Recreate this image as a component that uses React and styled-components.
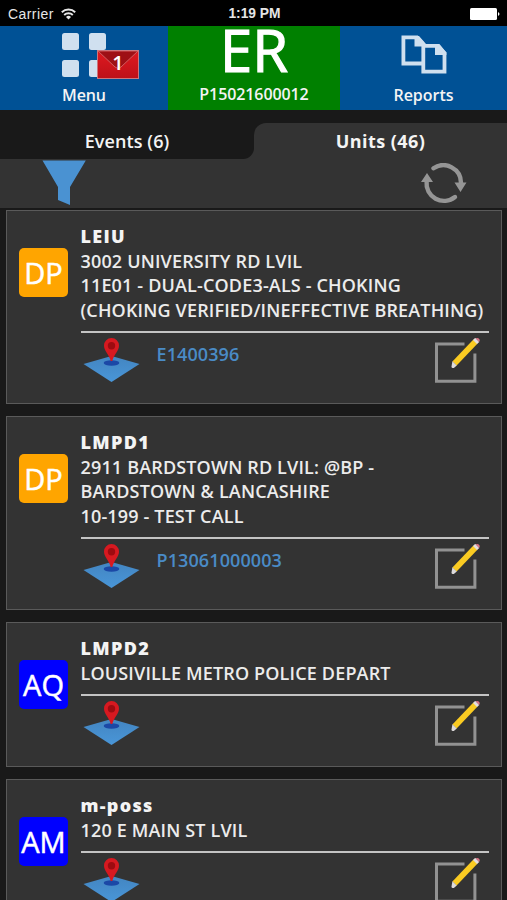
import React from "react";
import styled, { createGlobalStyle } from "styled-components";

const Global = createGlobalStyle`
  * { box-sizing: border-box; }
  html, body { margin: 0; background: #191919; }
  body { font-family: "Open Sans", "Noto Sans", sans-serif; color: #f4f4f4; }
  svg { display: block; flex: none; }
`;

const Screen = styled.div`
  width: 507px;
  height: 900px;
  overflow: hidden;
  background: #191919;
`;

const StatusBar = styled.div`
  display: grid;
  grid-template-columns: 1fr auto 1fr;
  align-items: center;
  height: 26px;
  padding: 2px 6px 0 8px;
  background: #000;
  color: #e6e6e6;
  font: 14px/20px "Liberation Sans", Arial, sans-serif;
`;

const Carrier = styled.div`
  display: flex;
  align-items: center;
  gap: 7px;
  letter-spacing: 0.42px;
`;

const Clock = styled.div`
  font-weight: 700;
  font-size: 13.8px;
  line-height: 16px;
`;

const Battery = styled.div`
  display: flex;
  justify-content: flex-end;
`;

const Header = styled.div`
  display: grid;
  grid-template-columns: 168px 172px 167px;
  height: 84px;
`;

const HeaderButton = styled.div`
  display: flex;
  flex-direction: column;
  align-items: center;
  height: 84px;
  padding-top: ${(p) => p.$top}px;
  background: ${(p) => (p.$active ? "#008000" : "#005195")};
`;

const HeaderLabel = styled.div`
  margin-top: ${(p) => p.$gap || 0}px;
  font-size: 16px;
  line-height: 22px;
  font-weight: 600;
  letter-spacing: ${(p) => p.$spacing || 0}px;
`;

const StatusCode = styled.div`
  font-size: 58px;
  line-height: 48px;
  height: 48px;
  margin-bottom: 9px;
  -webkit-text-stroke: 1.2px #fff;
  color: #fff;
`;

const MenuArt = styled.div`
  position: relative;
`;

const MailBadge = styled.div`
  position: absolute;
  left: 35px;
  top: 17px;
  width: 42px;
  height: 29px;
  svg { position: absolute; inset: 0; }
  span {
    position: absolute;
    inset: 0;
    text-align: center;
    font-size: 20px;
    line-height: 26px;
    font-weight: 600;
    color: #fff;
  }
`;

const Tabs = styled.div`
  display: grid;
  grid-template-columns: 254px 253px;
  height: 49px;
`;

const TabSlot = styled.div`
  padding-top: ${(p) => (p.$active ? 13 : 0)}px;
  background: ${(p) => (p.$active ? "#191919" : "#333")};
`;

const Tab = styled.div`
  height: 100%;
  padding-top: ${(p) => (p.$active ? 6 : 19)}px;
  border-radius: ${(p) => (p.$active ? "12px 0 0 0" : "0 0 11px 0")};
  background: ${(p) => (p.$active ? "#333" : "#191919")};
  text-align: center;
  font-size: 18px;
  line-height: 25px;
  font-weight: ${(p) => (p.$active ? 700 : 600)};
  letter-spacing: ${(p) => (p.$active ? 0.45 : 0.1)}px;
`;

const Toolbar = styled.div`
  display: flex;
  justify-content: space-between;
  align-items: flex-start;
  height: 49px;
  padding: 1px 40px 0 42px;
  background: #333;
  svg + svg { margin-top: 3px; }
`;

const List = styled.div`
  display: flex;
  flex-direction: column;
  gap: 12.5px;
  padding: 2px 5px 0 6px;
`;

const Card = styled.div`
  display: grid;
  grid-template-columns: 49px 408.5px;
  column-gap: 12.5px;
  flex: none;
  height: ${(p) => p.$height}px;
  padding: 13px 12px 0;
  border: 1px solid #5a5a5a;
  background: #333;
`;

const Avatar = styled.div`
  width: 49px;
  height: 49px;
  margin-top: 24px;
  border-radius: 5px;
  background: ${(p) => p.$color};
  color: #fff;
  text-align: center;
  white-space: nowrap;
  font-size: 29px;
  line-height: 49px;
  -webkit-text-stroke: 0.5px #fff;
`;

const Body = styled.div`
  min-width: 0;
  font-size: 18px;
  line-height: 24.5px;
  font-weight: 600;
  white-space: nowrap;
`;

const UnitName = styled.div`
  font-weight: 800;
  letter-spacing: 1.3px;
`;

const Line = styled.div`
  color: #ececec;
  letter-spacing: 0.16px;
`;

const Actions = styled.div`
  display: flex;
  align-items: flex-start;
  margin-top: 9px;
  padding: 5px 8px 0 2px;
  border-top: 2px solid #c4c4c4;
`;

const EventLink = styled.div`
  flex: 1;
  margin: 4px 0 0 16px;
  color: #4a8bc6;
  letter-spacing: 0.1px;
`;

function WifiIcon() {
  return (
    <svg width="15" height="12" viewBox="0 0 15 12" fill="none" stroke="#e6e6e6" strokeWidth="1.9">
      <path d="M.8 4.2a9.6 9.6 0 0 1 13.4 0M3.2 7a6.2 6.2 0 0 1 8.6 0" />
      <path d="M7.5 11.5 5 9a3.6 3.6 0 0 1 5 0Z" fill="#e6e6e6" stroke="none" />
    </svg>
  );
}

function BatteryIcon() {
  return (
    <svg width="31" height="12" viewBox="0 0 31 12" fill="#fff">
      <rect x="0" width="27" height="12" rx="1.5" />
      <path d="M28 4q3 2 0 4Z" />
    </svg>
  );
}

function GridIcon() {
  return (
    <svg width="44" height="44" viewBox="0 0 44 44" fill="#d0e0ef">
      <rect width="17" height="17" rx="2.5" />
      <rect x="27" width="17" height="17" rx="2.5" />
      <rect y="27" width="17" height="17" rx="2.5" />
      <rect x="27" y="27" width="17" height="17" rx="2.5" />
    </svg>
  );
}

function Envelope() {
  return (
    <svg width="42" height="29" viewBox="0 0 42 29">
      <defs>
        <linearGradient id="mail" x2="0" y2="1">
          <stop offset="0" stopColor="#e01920" />
          <stop offset="1" stopColor="#bd1119" />
        </linearGradient>
      </defs>
      <rect x=".5" y=".5" width="41" height="28" fill="url(#mail)" />
      <path d="M1 1h40L24 17q-3 3-6 0Z" fill="#9e1015" stroke="#d25c60" strokeWidth="1" />
      <rect x=".5" y=".5" width="41" height="28" fill="none" stroke="#ca777e" />
    </svg>
  );
}

function ReportsIcon() {
  return (
    <svg width="46" height="40" viewBox="0 0 46 40" fill="none" stroke="#d0e0ef" strokeWidth="3.8">
      <path d="M21 28.5H2.4V2.4H16l6 6.5" />
      <path d="M13.5 1H18l7 8v2.5H13.5Z" fill="#d0e0ef" stroke="none" />
      <path d="M22.3 10.8h14.5l6.7 7.5v18.3H22.3Z" />
      <path d="M34 9h4.4l7 8.5V20H34Z" fill="#d0e0ef" stroke="none" />
    </svg>
  );
}

function FilterIcon() {
  return (
    <svg width="45" height="46" viewBox="0 0 45 46">
      <path d="M.5.5h43.3L28 27v18l-12-5V27Z" fill="#4a92d2" />
    </svg>
  );
}

function RefreshIcon() {
  return (
    <svg width="46" height="42" viewBox="0 0 46 42" fill="none" stroke="#959595" strokeWidth="4.4" strokeLinecap="round">
      <path d="M12.5 5.3A17.6 17.6 0 0 1 40 20" />
      <path d="M5.6 18.5A17.5 17.5 0 0 0 34 34" />
      <path d="M33.5 19.5h12L39.5 29ZM0 19h12L6 10Z" fill="#959595" stroke="none" />
    </svg>
  );
}

function MapPin() {
  return (
    <svg width="58" height="46" viewBox="0 0 58 46">
      <defs>
        <linearGradient id="plane" x2="0" y2="1">
          <stop offset="0" stopColor="#4385c1" />
          <stop offset="1" stopColor="#4996d8" />
        </linearGradient>
      </defs>
      <path d="M.5 26 28.5 18 56.5 26 28.5 44Z" fill="url(#plane)" />
      <ellipse cx="28.5" cy="25" rx="7.8" ry="2.7" fill="#1b48a6" />
      <path d="M21 7.5a7.5 7.5 0 0 1 15 0C36 13 31 16 29.3 23h-1.6C26 16 21 13 21 7.5Z" fill="#d71920" />
      <circle cx="28.5" cy="7.7" r="3.7" fill="#9d0b10" />
    </svg>
  );
}

function EditIcon() {
  return (
    <svg width="47" height="46" viewBox="0 0 47 46">
      <path d="M30.5 5.9H2.5v37.4h38.4V15.5" fill="none" stroke="#929292" strokeWidth="3" />
      <path d="m20.5 25.5 21-22" stroke="#facb22" strokeWidth="5.8" />
      <path d="m17.5 28.8.9-5.5 4.4 4.2-3 2.4q-2.2.6-2.3-1.1Z" fill="#dedbdc" />
      <path d="m39 2 2.2-2.2 4.1 4.1L43 6.1Z" fill="#e4dddf" />
      <path d="m41.7.1 1.3-.1q3 .5 2.7 2.7l-.7 1.3Z" fill="#dd7587" />
    </svg>
  );
}

const units = [
  {
    code: "DP", color: "#ffa500", name: "LEIU", event: "E1400396", height: 193.5,
    lines: ["3002 UNIVERSITY RD LVIL", "11E01 - DUAL-CODE3-ALS - CHOKING", "(CHOKING VERIFIED/INEFFECTIVE BREATHING)"],
  },
  {
    code: "DP", color: "#ffa500", name: "LMPD1", event: "P13061000003", height: 193.5,
    lines: ["2911 BARDSTOWN RD LVIL: @BP -", "BARDSTOWN & LANCASHIRE", "10-199 - TEST CALL"],
  },
  { code: "AQ", color: "#0000ff", name: "LMPD2", event: "", height: 144.5, lines: ["LOUSIVILLE METRO POLICE DEPART"] },
  { code: "AM", color: "#0000ff", name: "m-poss", event: "", height: 144.5, lines: ["120 E MAIN ST LVIL"] },
];

function UnitCard({ unit }) {
  return (
    <Card $height={unit.height}>
      <Avatar $color={unit.color}>{unit.code}</Avatar>
      <Body>
        <UnitName>{unit.name}</UnitName>
        {unit.lines.map((line) => (
          <Line key={line}>{line}</Line>
        ))}
        <Actions>
          <MapPin />
          <EventLink>{unit.event}</EventLink>
          <EditIcon />
        </Actions>
      </Body>
    </Card>
  );
}

export default function App() {
  return (
    <Screen>
      <Global />
      <StatusBar>
        <Carrier>Carrier <WifiIcon /></Carrier>
        <Clock>1:19 PM</Clock>
        <Battery><BatteryIcon /></Battery>
      </StatusBar>
      <Header>
        <HeaderButton $top={7}>
          <MenuArt>
            <GridIcon />
            <MailBadge><Envelope /><span>1</span></MailBadge>
          </MenuArt>
          <HeaderLabel $gap={7} $spacing={-0.1}>Menu</HeaderLabel>
        </HeaderButton>
        <HeaderButton $active $top={0}>
          <StatusCode>ER</StatusCode>
          <HeaderLabel $spacing={-0.1}>P15021600012</HeaderLabel>
        </HeaderButton>
        <HeaderButton $top={9}>
          <ReportsIcon />
          <HeaderLabel $gap={9}>Reports</HeaderLabel>
        </HeaderButton>
      </Header>
      <Tabs>
        <TabSlot><Tab>Events (6)</Tab></TabSlot>
        <TabSlot $active><Tab $active>Units (46)</Tab></TabSlot>
      </Tabs>
      <Toolbar>
        <FilterIcon />
        <RefreshIcon />
      </Toolbar>
      <List>
        {units.map((unit) => (
          <UnitCard key={unit.name} unit={unit} />
        ))}
      </List>
    </Screen>
  );
}
